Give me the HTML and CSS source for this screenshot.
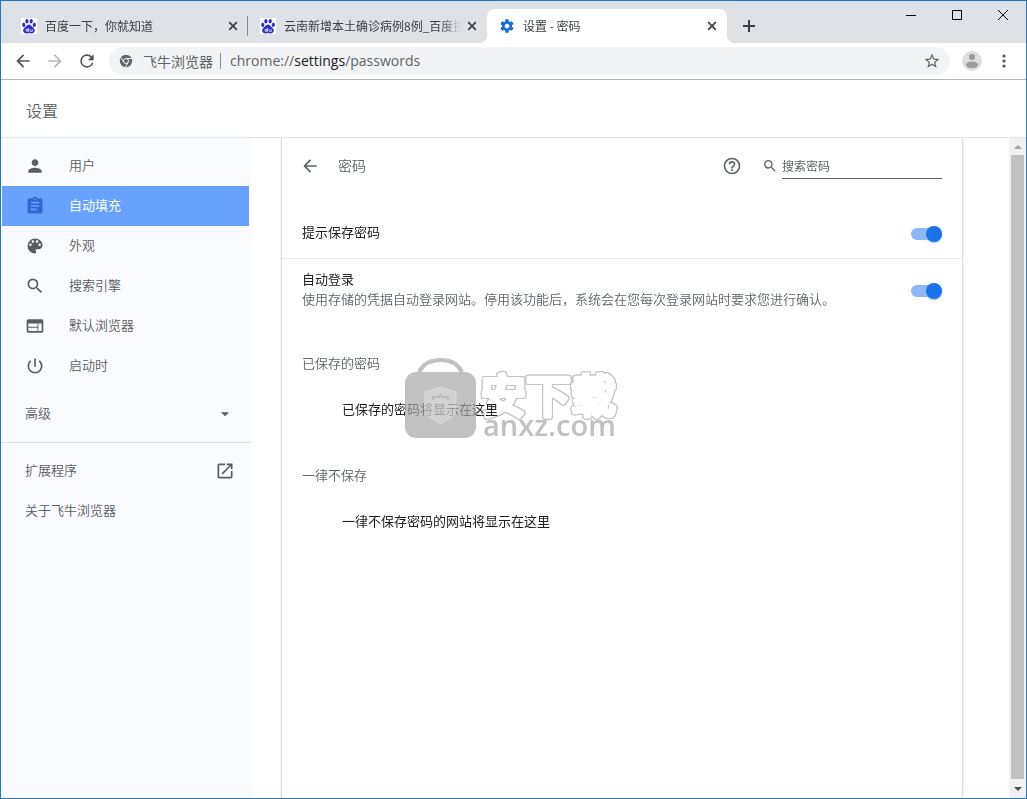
FILE: index.html
```html
<!DOCTYPE html>
<html lang="zh-CN">
<head>
<meta charset="utf-8">
<title>设置 - 密码</title>
<link rel="stylesheet" href="styles.css">
</head>
<body>
<svg class="defs" width="0" height="0" aria-hidden="true">
  <symbol id="paw" viewBox="0 0 16 16">
    <rect width="16" height="16" rx="1" fill="#fff"/>
    <g fill="#2b2fc4">
      <ellipse cx="5.9" cy="3.3" rx="1.6" ry="2.3"/>
      <ellipse cx="10.2" cy="3.3" rx="1.6" ry="2.3" transform="rotate(8 10.2 3.3)"/>
      <ellipse cx="2.8" cy="6.9" rx="1.6" ry="2.2" transform="rotate(-12 2.8 6.9)"/>
      <ellipse cx="13.3" cy="6.9" rx="1.6" ry="2.1" transform="rotate(12 13.3 6.9)"/>
      <path d="M8 6.4c1.5 0 2.2 1.2 3 2.2 1 1.200 2.800 2 2.800 4 0 1.800-1.300 2.800-2.800 2.800-1.200 0-1.900-.3-3-.3s-1.800.3-3 .3c-1.600 0-2.900-1-2.900-2.800 0-2 1.900-2.800 2.900-4 .8-1 1.500-2.200 3-2.200z"/>
    </g>
    <g fill="none" stroke="#fff" stroke-width=".8">
      <circle cx="6" cy="12.300" r="1.100"/><path d="M7.400 10v3.700M9.100 11.200v1.300q0 1 1.100 1h1V11.200"/>
    </g>
  </symbol>
  <symbol id="x" viewBox="0 0 10 10"><path d="M1.200 1.200l7.600 7.600M8.800 1.200L1.200 8.800" stroke="currentColor" stroke-width="1.700" fill="none"/></symbol>
  <symbol id="back" viewBox="0 0 24 24"><path d="M20 11H7.830l5.590-5.590L12 4l-8 8 8 8 1.410-1.410L7.830 13H20v-2z"/></symbol>
  <symbol id="search" viewBox="0 0 24 24"><path d="M15.500 14h-.79l-.28-.27A6.470 6.470 0 0 0 16 9.500 6.500 6.500 0 1 0 9.500 16c1.610 0 3.090-.59 4.230-1.570l.27.280v.79l5 4.990L20.490 19l-4.990-5zm-6 0C7.010 14 5 11.990 5 9.500S7.010 5 9.500 5 14 7.010 14 9.500 11.990 14 9.500 14z"/></symbol>
</svg>

<div class="window">
  <header class="tabstrip">
    <div class="tabs" role="tablist">
      <div class="tab divided" role="tab">
        <svg class="favicon"><use href="#paw"/></svg>
        <span class="tab-title">百度一下，你就知道</span>
        <button class="tab-close" aria-label="关闭"><svg><use href="#x"/></svg></button>
      </div>
      <div class="tab" role="tab">
        <svg class="favicon"><use href="#paw"/></svg>
        <span class="tab-title">云南新增本土确诊病例8例_百度搜索</span>
        <button class="tab-close" aria-label="关闭"><svg><use href="#x"/></svg></button>
      </div>
      <div class="tab active" role="tab" aria-selected="true">
        <svg class="favicon gear" viewBox="0 0 24 24"><path d="M19.430 12.980c.04-.32.070-.64.070-.98s-.03-.66-.07-.98l2.110-1.650c.19-.15.240-.42.120-.64l-2-3.460c-.12-.22-.39-.3-.61-.22l-2.490 1c-.52-.4-1.080-.73-1.690-.98l-.38-2.650A.49.49 0 0 0 14 2h-4c-.25 0-.46.18-.49.42l-.38 2.650c-.61.25-1.170.59-1.690.98l-2.490-1c-.23-.09-.49 0-.61.220l-2 3.460c-.13.22-.07.490.12.640l2.110 1.650c-.04.320-.07.650-.07.980s.03.660.07.980l-2.110 1.650c-.19.150-.24.420-.12.640l2 3.460c.12.220.39.300.61.220l2.490-1c.52.400 1.080.730 1.690.980l.38 2.650c.03.240.24.420.49.420h4c.25 0 .46-.18.490-.42l.38-2.650c.61-.25 1.170-.59 1.690-.98l2.490 1c.23.090.49 0 .61-.22l2-3.460c.12-.22.070-.49-.12-.64l-2.110-1.650zM12 15.500c-1.930 0-3.500-1.570-3.500-3.500s1.570-3.500 3.500-3.500 3.500 1.570 3.500 3.500-1.570 3.500-3.500 3.500z"/></svg>
        <span class="tab-title">设置 - 密码</span>
        <button class="tab-close" aria-label="关闭"><svg><use href="#x"/></svg></button>
      </div>
      <button class="new-tab" aria-label="新标签页"><svg viewBox="0 0 12 12"><path d="M6 0v12M0 6h12" stroke="currentColor" stroke-width="2"/></svg></button>
    </div>
    <div class="window-controls">
      <button aria-label="最小化"><svg viewBox="0 0 10 10"><path d="M0 5.500h10"/></svg></button>
      <button aria-label="最大化"><svg viewBox="0 0 10 10"><path d="M.5.500h9v9h-9z"/></svg></button>
      <button aria-label="关闭窗口"><svg viewBox="0 0 10 10"><path d="M0 0l10 10M10 0L0 10"/></svg></button>
    </div>
  </header>

  <nav class="toolbar">
    <button class="nav-btn" aria-label="后退"><svg><use href="#back"/></svg></button>
    <button class="nav-btn forward" aria-label="前进" disabled><svg viewBox="0 0 24 24"><path d="M4 11h12.170l-5.590-5.590L12 4l8 8-8 8-1.410-1.410L16.170 13H4v-2z"/></svg></button>
    <button class="nav-btn" aria-label="重新加载"><svg viewBox="0 0 24 24"><path d="M17.650 6.350A7.960 7.960 0 0 0 12 4a8 8 0 1 0 7.730 10h-2.080A6 6 0 1 1 12 6c1.660 0 3.140.69 4.220 1.780L13 11h7V4l-2.350 2.350z"/></svg></button>
    <div class="omnibox">
      <svg class="site-icon" viewBox="0 0 14 14"><circle cx="7" cy="7" r="6.200" fill="#5f6368"/><circle cx="7" cy="7" r="2.500" fill="none" stroke="#f1f3f4"/><path d="M7 4.500h6M4.800 8.300L2 3.500M9.200 8.300L6.500 13" stroke="#f1f3f4" fill="none"/></svg>
      <span class="site-name">飞牛浏览器</span>
      <span class="url" role="textbox" aria-label="地址">chrome://<b>settings</b>/passwords</span>
      <button class="star" aria-label="收藏"><svg viewBox="0 0 24 24"><path d="M22 9.240l-7.190-.62L12 2 9.190 8.630 2 9.240l5.460 4.730L5.820 21 12 17.270 18.180 21l-1.630-7.030L22 9.240zM12 15.400l-3.760 2.270 1-4.280-3.320-2.880 4.380-.38L12 6.100l1.710 4.040 4.380.38-3.320 2.880 1 4.280L12 15.400z"/></svg></button>
    </div>
    <button class="avatar" aria-label="用户"><svg viewBox="0 0 20 20"><circle cx="10" cy="10" r="10" fill="#dedede"/><circle cx="10" cy="6" r="3" fill="#9b9b9b"/><ellipse cx="10" cy="13.800" rx="6" ry="3.300" fill="#9b9b9b"/></svg></button>
    <button class="menu" aria-label="菜单"><svg viewBox="0 0 4 14"><circle cx="2" cy="2" r="1.600"/><circle cx="2" cy="7" r="1.600"/><circle cx="2" cy="12" r="1.600"/></svg></button>
  </nav>

  <div class="page-head"><h1>设置</h1></div>

  <div class="body">
    <aside class="sidebar">
      <a class="item" href="#people"><svg viewBox="0 0 24 24"><path d="M12 12c2.210 0 4-1.790 4-4s-1.790-4-4-4-4 1.790-4 4 1.790 4 4 4zm0 2c-2.670 0-8 1.340-8 4v2h16v-2c0-2.660-5.330-4-8-4z"/></svg>用户</a>
      <a class="item selected" href="#autofill"><svg viewBox="0 0 24 24"><path d="M19 3h-4.180C14.400 1.840 13.300 1 12 1s-2.400.840-2.820 2H5c-1.100 0-2 .9-2 2v14c0 1.100.9 2 2 2h14c1.100 0 2-.9 2-2V5c0-1.100-.9-2-2-2zm-7 0c.55 0 1 .45 1 1s-.45 1-1 1-1-.45-1-1 .45-1 1-1zm2 14H7v-2h7v2zm3-4H7v-2h10v2zm0-4H7V7h10v2z"/></svg>自动填充</a>
      <a class="item" href="#appearance"><svg viewBox="0 0 24 24"><path d="M12 3a9 9 0 0 0 0 18c.83 0 1.500-.67 1.500-1.500 0-.39-.15-.74-.39-1.010-.23-.26-.38-.61-.38-.99 0-.83.670-1.500 1.500-1.500H16c2.760 0 5-2.240 5-5 0-4.420-4.030-8-9-8zm-5.500 9a1.500 1.500 0 1 1 0-3 1.500 1.500 0 0 1 0 3zm3-4a1.500 1.500 0 1 1 0-3 1.500 1.500 0 0 1 0 3zm5 0a1.500 1.500 0 1 1 0-3 1.500 1.500 0 0 1 0 3zm3 4a1.500 1.500 0 1 1 0-3 1.500 1.500 0 0 1 0 3z"/></svg>外观</a>
      <a class="item" href="#search-engine"><svg><use href="#search"/></svg>搜索引擎</a>
      <a class="item" href="#default"><svg viewBox="0 0 24 24"><path d="M20 4H4c-1.100 0-1.990.9-1.990 2L2 18c0 1.100.9 2 2 2h16c1.100 0 2-.9 2-2V6c0-1.100-.9-2-2-2zm-5 14H4v-4h11v4zm0-5H4V9h11v4zm5 5h-4V9h4v9z"/></svg>默认浏览器</a>
      <a class="item" href="#startup"><svg viewBox="0 0 24 24"><path d="M13 3h-2v10h2V3zm4.830 2.170l-1.420 1.420A6.920 6.920 0 0 1 19 12a7 7 0 1 1-11.420-5.420L6.170 5.170A8.930 8.930 0 0 0 3 12a9 9 0 0 0 18 0c0-2.740-1.230-5.180-3.170-6.830z"/></svg>启动时</a>
      <button class="item plain advanced">高级<svg viewBox="0 0 24 24"><path d="M6.500 9.500l5.500 5.500 5.500-5.500z"/></svg></button>
      <a class="item plain" href="#extensions">扩展程序<svg viewBox="0 0 24 24"><path d="M19 19H5V5h7V3H5a2 2 0 0 0-2 2v14a2 2 0 0 0 2 2h14c1.100 0 2-.9 2-2v-7h-2v7zM14 3v2h3.590l-9.830 9.830 1.410 1.410L19 6.410V10h2V3h-7z"/></svg></a>
      <a class="item plain" href="#about">关于飞牛浏览器</a>
    </aside>

    <main class="card">
      <div class="card-head">
        <button class="card-back" aria-label="返回"><svg><use href="#back"/></svg></button>
        <h2>密码</h2>
        <button class="help" aria-label="帮助"><svg viewBox="0 0 24 24"><path d="M11 18h2v-2h-2v2zm1-16a10 10 0 1 0 0 20 10 10 0 0 0 0-20zm0 18c-4.410 0-8-3.590-8-8s3.590-8 8-8 8 3.590 8 8-3.590 8-8 8zm0-14a4 4 0 0 0-4 4h2c0-1.100.9-2 2-2s2 .9 2 2c0 2-3 1.750-3 5h2c0-2.250 3-2.500 3-5a4 4 0 0 0-4-4z"/></svg></button>
        <label class="search"><svg><use href="#search"/></svg><input type="text" placeholder="搜索密码" aria-label="搜索密码"></label>
      </div>
      <div class="row first">
        <label for="offer-save">提示保存密码</label>
        <input class="toggle" id="offer-save" type="checkbox" role="switch" checked>
      </div>
      <div class="row">
        <label for="auto-login">自动登录<span class="sub">使用存储的凭据自动登录网站。停用该功能后，系统会在您每次登录网站时要求您进行确认。</span></label>
        <input class="toggle" id="auto-login" type="checkbox" role="switch" checked>
      </div>
      <section class="list">
        <h3>已保存的密码</h3>
        <p>已保存的密码将显示在这里</p>
      </section>
      <section class="list">
        <h3>一律不保存</h3>
        <p>一律不保存密码的网站将显示在这里</p>
      </section>
      <svg class="watermark" viewBox="0 0 218 84">
        <path d="M14 15C18 7 26 3 35.500 3S53 7 57 15" fill="none" stroke="#c1c1c1" stroke-width="4"/>
        <rect y="15" width="71" height="66" rx="11" fill="#a8a8a8" fill-opacity=".7"/>
        <path d="M35.500 30l15.500 5v16c0 7-6 11-15.500 15.500C26 62 20 58 20 51V35z" fill="#fff" fill-opacity=".25" stroke="#fff" stroke-opacity=".3"/>
        <path d="M28 43v-3h6l1.500-2 1.500 2h6v3" fill="none" stroke="#a8a8a8" stroke-opacity=".5" stroke-width="2"/>
        <text class="mark-name" x="76" y="56">安下载</text>
        <text class="mark-site" x="78" y="79">anxz.com</text>
      </svg>
    </main>

    <div class="scrollbar" aria-hidden="true">
      <svg class="up" viewBox="0 0 8 4"><path d="M4 0l4 4H0z" fill="#a3a3a3"/></svg>
      <div class="thumb"></div>
      <svg viewBox="0 0 8 4"><path d="M0 0h8L4 4z" fill="#505050"/></svg>
    </div>
  </div>
</div>
</body>
</html>
```
FILE: styles.css
```css
* { box-sizing: border-box; }

body {
  margin: 0;
  font: 13px/20px "Noto Sans CJK SC", sans-serif;
  color: #202124;
}

button {
  display: flex;
  align-items: center;
  justify-content: center;
  padding: 0;
  border: 0;
  background: none;
  color: inherit;
  font: inherit;
}

h1, h2, h3, p { margin: 0; font-weight: 350; }
svg { display: block; flex: none; fill: currentColor; }
.defs { position: absolute; }

.window {
  display: flex;
  flex-direction: column;
  height: 100vh;
  border: 1px solid #1f7bbd;
  background: #fff;
}

/* Tab strip */
.tabstrip {
  display: flex;
  justify-content: space-between;
  flex: none;
  height: 42px;
  background: #dee1e6;
}
.tabs {
  display: flex;
  flex: 0 1 770px;
  min-width: 0;
  padding: 8px 0 0 8px;
}
.tab {
  position: relative;
  display: flex;
  align-items: center;
  flex: 0 1 239px;
  min-width: 0;
  padding: 0 10px 0 12px;
  color: #3c4043;
  font-size: 12px;
}
.divided::after {
  content: "";
  position: absolute;
  right: 0;
  width: 1px;
  height: 20px;
  background: #868a8f;
}
.active {
  flex-basis: 240px;
  border-radius: 8px 8px 0 0;
  background: #fff;
}
.active::before, .active::after {
  content: "";
  position: absolute;
  bottom: 0;
  width: 8px;
  height: 8px;
}
.active::before { right: 100%; background: radial-gradient(circle at 0 0, #dee1e6 8px, #fff 8px); }
.active::after { left: 100%; background: radial-gradient(circle at 100% 0, #dee1e6 8px, #fff 8px); }
.favicon { width: 16px; height: 16px; }
.gear { color: #1a6fd6; }
.tab-title {
  flex: 1;
  min-width: 0;
  margin: 0 6px 0 8px;
  overflow: hidden;
  white-space: nowrap;
  -webkit-mask-image: linear-gradient(to left, transparent, #000 20px);
  mask-image: linear-gradient(to left, transparent, #000 20px);
}
.tab-close svg { width: 10px; height: 10px; }
.new-tab { width: 44px; color: #3c4043; }
.new-tab svg { width: 12px; height: 12px; }
.window-controls { display: flex; height: 28px; }
.window-controls button { width: 46px; color: #000; }
.window-controls svg {
  width: 10px;
  height: 10px;
  overflow: visible;
  fill: none;
  stroke: currentColor;
}

/* Toolbar */
.toolbar {
  display: flex;
  align-items: center;
  flex: none;
  height: 37px;
  padding: 0 12px 0 6px;
  border-bottom: 1px solid #b4b5b6;
  color: #505357;
}
.nav-btn { width: 32px; height: 32px; }
.nav-btn svg { width: 20px; height: 20px; }
.forward { color: #b4b6b9; }
.omnibox {
  display: flex;
  align-items: center;
  flex: 1;
  min-width: 0;
  height: 28px;
  margin: 0 12px 0 6px;
  padding: 0 10px;
  border-radius: 14px;
  background: #f1f3f4;
  color: #5f6368;
  font-size: 14px;
}
.site-icon { width: 14px; height: 14px; margin-right: 10px; }
.site-name { padding-right: 7px; border-right: 1px solid #8b8f93; line-height: 16px; white-space: nowrap; }
.url { flex: 1; min-width: 0; margin-left: 9px; overflow: hidden; font-family: "Open Sans", sans-serif; }
.url b { color: #202124; font-weight: 400; }
.star svg { width: 18px; height: 18px; }
.star { margin-right: -1px; }
.avatar svg { width: 20px; height: 20px; }
.menu { width: 20px; margin-left: 12px; }
.menu svg { width: 4px; height: 14px; }

/* Settings page */
.page-head {
  display: flex;
  align-items: center;
  flex: none;
  height: 58px;
  padding: 2px 25px 0;
  border-bottom: 1px solid #e4e5e6;
}
.page-head h1 { color: #5f6368; font-size: 16px; }
.body { display: flex; flex: 1; min-height: 0; }

.sidebar {
  flex: none;
  width: 250px;
  padding-top: 8px;
  background: #f9fbff;
}
.item {
  display: flex;
  align-items: center;
  gap: 24px;
  height: 40px;
  margin: 0 2px 0 1px;
  padding: 0 14px 2px 23px;
  color: #5a5d61;
  font-weight: 350;
  text-decoration: none;
}
.item svg { width: 20px; height: 20px; margin-top: 2px; }
.selected { background: #68a2ff; color: #fff; font-weight: 400; }
.selected svg { color: #2f68d0; }
.plain { justify-content: space-between; }
.advanced {
  width: 100%;
  height: 57px;
  margin: 0 0 8px;
  padding: 0 17px 2px 24px;
  border-bottom: 1px solid #dadee6;
}
.advanced svg { width: 18px; height: 18px; }

.card {
  position: relative;
  flex: 1;
  min-width: 0;
  margin: 0 46px 0 30px;
  border: solid #dcdddf;
  border-width: 0 1px;
  box-shadow: 0 0 2px #dddddd;
  clip-path: inset(0 -3px);
}
.card-head {
  display: flex;
  align-items: center;
  height: 56px;
  margin-bottom: 14px;
  padding: 0 20px 0 18px;
  color: #5f6368;
}
.card-back svg { width: 20px; height: 20px; }
.card-head h2 { margin-left: 18px; padding-bottom: 2px; font-size: 14px; }
.help { margin-left: auto; }
.help svg { width: 20px; height: 20px; }
.search { display: flex; align-items: center; gap: 4px; margin-left: 20px; }
.search svg { width: 16px; height: 16px; }
.search input {
  width: 160px;
  height: 26px;
  padding: 0;
  border: 0;
  border-bottom: 1px solid #5f6368;
  outline: 0;
  background: none;
  font: inherit;
  font-size: 12px;
}
.search input::placeholder { color: #5f6368; opacity: 1; }

.row {
  display: flex;
  align-items: center;
  justify-content: space-between;
  height: 62px;
  padding: 0 20px;
}
.row label { padding-bottom: 2px; }
.first { height: 51px; border-bottom: 1px solid #e8e9eb; }
.sub { display: block; color: #5f6368; font-weight: 350; }
.toggle {
  appearance: none;
  position: relative;
  flex: none;
  width: 32px;
  height: 16px;
  margin: 2px 0 0;
}
.toggle::before, .toggle::after { content: ""; position: absolute; }
.toggle::before { inset: 2px 4px 2px 1px; border-radius: 6px; background: #8db7f5; }
.toggle::after {
  top: 0;
  right: 0;
  width: 16px;
  height: 16px;
  border-radius: 50%;
  background: #1a73e8;
  box-shadow: 0 1px 2px #9bbcec;
}

.list { padding: 22px 20px 0; }
.list h3 { color: #5f6368; font-size: 13px; line-height: 40px; }
.list p { padding: 2px 0 0 40px; font-weight: 400; line-height: 48px; }

/* Overlaid watermark */
.watermark {
  position: absolute;
  top: 219px;
  left: 123px;
  width: 218px;
  height: 84px;
  overflow: visible;
  pointer-events: none;
}
.mark-name {
  fill: #fff;
  stroke: #fff;
  stroke-width: 4px;
  stroke-linejoin: round;
  font-size: 45px;
  font-weight: 500;
  filter: drop-shadow(1px 0 #c4c4c4) drop-shadow(-1px 0 #c4c4c4) drop-shadow(0 1px #c4c4c4) drop-shadow(0 -1px #c4c4c4);
  mix-blend-mode: multiply;
}
.mark-site { fill: #c1c1c1; font: 600 29px "Open Sans", sans-serif; }

/* Page scrollbar */
.scrollbar {
  display: flex;
  flex-direction: column;
  align-items: center;
  flex: none;
  width: 17px;
  padding: 7px 0;
  background: #f1f1f1;
}
.scrollbar svg { width: 8px; height: 4px; }
.thumb { flex: 1; width: 13px; margin: 6px 0 8px; background: #c1c1c1; }
```
